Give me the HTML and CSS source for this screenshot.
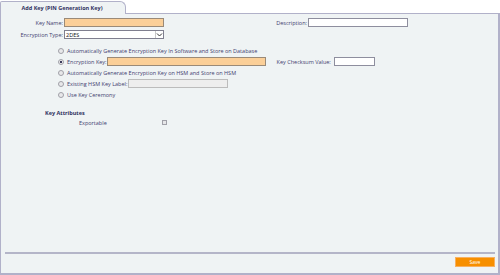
FILE: index.html
```html
<!DOCTYPE html>
<html lang="en">
<head>
    <meta charset="UTF-8">
    <title>Add Key</title>
    <link rel="stylesheet" href="styles.css">
</head>
<body>
    <div class="page">
        <div class="tab">Add Key (PIN Generation Key)</div>
        <div class="panel">
            <div class="form">
                <div class="row top-row">
                    <label class="lbl">Key Name:</label>
                    <input class="field required" type="text">
                    <label class="lbl lbl-desc">Description:</label>
                    <input class="field" type="text">
                </div>
                <div class="row">
                    <label class="lbl">Encryption Type:</label>
                    <div class="select">
                        <span>2DES</span>
                        <span class="arrow">
                            <svg width="7" height="6" viewBox="0 0 7 6"><path d="M1 1.5 L3.5 4 L6 1.5" fill="none" stroke="#333" stroke-width="1"/></svg>
                        </span>
                    </div>
                </div>

                <div class="options">
                    <div class="opt"><span class="radio"></span>Automatically Generate Encryption Key In Software and Store on Database</div>
                    <div class="opt">
                        <span class="radio checked"></span>Encryption Key:
                        <input class="field required long" type="text">
                        <span class="chk-lbl">Key Checksum Value:</span>
                        <input class="field short" type="text">
                    </div>
                    <div class="opt"><span class="radio"></span>Automatically Generate Encryption Key on HSM and Store on HSM</div>
                    <div class="opt"><span class="radio"></span>Existing HSM Key Label:<input class="field disabled" type="text"></div>
                    <div class="opt"><span class="radio"></span>Use Key Ceremony</div>
                </div>

                <div class="attrs">
                    <h3 class="attrs-title">Key Attributes</h3>
                    <div class="attr-row">
                        <span class="attr-lbl">Exportable</span>
                        <span class="checkbox"></span>
                    </div>
                </div>
            </div>

            <div class="footer">
                <button class="save">Save</button>
            </div>
        </div>
    </div>
</body>
</html>
```

FILE: styles.css
```css
* {
    margin: 0;
    padding: 0;
    box-sizing: border-box;
}

body {
    font-family: "Open Sans", "Noto Sans", sans-serif;
    font-size: 5.5px;
    color: #3f4170;
    background: #ffffff;
    white-space: nowrap;
}

.page {
    width: 500px;
    height: 275px;
    display: flex;
    flex-direction: column;
}

.tab {
    position: relative;
    z-index: 1;
    width: 126px;
    height: 13px;
    margin-top: 1px;
    margin-bottom: -1px;
    background: #eff3f4;
    border: 1px solid #b1b1c9;
    border-bottom: none;
    border-radius: 2px 6px 0 0;
    font-weight: 700;
    color: #2f3160;
    text-align: center;
    line-height: 12px;
    padding-right: 2px;
}

.panel {
    flex: 1;
    display: flex;
    flex-direction: column;
    background: #eff3f4;
    border: 1px solid #b1b1c9;
    border-right-width: 2px;
    border-bottom-width: 2px;
}

.form {
    flex: 1;
    padding-top: 4px;
}

.row {
    display: flex;
    align-items: center;
    height: 9px;
    margin-bottom: 4px;
}

.row + .row {
    margin-top: -1px;
}

.lbl {
    width: 63px;
    text-align: right;
    padding-right: 1px;
}

.lbl-desc {
    width: 144px;
}

.field {
    width: 100px;
    height: 9px;
    border: 1px solid #8e8e9e;
    background: #ffffff;
    font-size: 6px;
}

.field.required {
    background: #fbcf98;
    border-color: #9a8a78;
}

.field.disabled {
    background: #eeeeee;
    border-color: #bcbcbc;
    margin-left: 1px;
}

.select {
    width: 100px;
    height: 9px;
    border: 1px solid #7f7f8f;
    background: #ffffff;
    display: flex;
    align-items: center;
    justify-content: space-between;
    color: #111111;
    padding-left: 1px;
}

.arrow {
    display: flex;
    align-items: center;
    justify-content: center;
    width: 8px;
    height: 7px;
    border-left: 1px solid #c8c8c8;
}

.options {
    margin-top: 6px;
    margin-left: 57px;
}

.opt {
    display: flex;
    align-items: center;
    height: 11px;
}

.radio {
    width: 6px;
    height: 6px;
    border: 1px solid #a0a0a8;
    border-radius: 50%;
    background: #e8e8ea;
    margin-right: 3px;
}

.radio.checked {
    background: radial-gradient(circle, #3a3a5a 0 1.3px, #f4f4f4 1.6px);
}

.long {
    width: 159px;
    margin-left: 0;
}

.chk-lbl {
    margin-left: 11px;
    width: 57px;
}

.short {
    width: 41px;
}

.attrs {
    margin-top: 9px;
    margin-left: 44px;
}

.attrs-title {
    font-size: 5.5px;
    font-weight: 700;
    color: #2f3160;
    height: 9px;
    line-height: 9px;
}

.attr-row {
    display: flex;
    align-items: center;
    height: 11px;
    margin-top: -1px;
}

.attr-lbl {
    margin-left: 34px;
    width: 83px;
}

.checkbox {
    width: 5px;
    height: 5px;
    border: 1px solid #a0a0a8;
    background: #e6e6e8;
}

.footer {
    margin: 0 3px 0 4px;
    border-top: 2px solid #b4b5c8;
    height: 21px;
    display: flex;
    justify-content: flex-end;
    align-items: center;
    padding-bottom: 3px;
}

.save {
    width: 40px;
    height: 10px;
    background: #f78f00;
    border: 1px solid #f7b060;
    color: #ffffff;
    font-family: "Open Sans", sans-serif;
    font-size: 5px;
}
```
